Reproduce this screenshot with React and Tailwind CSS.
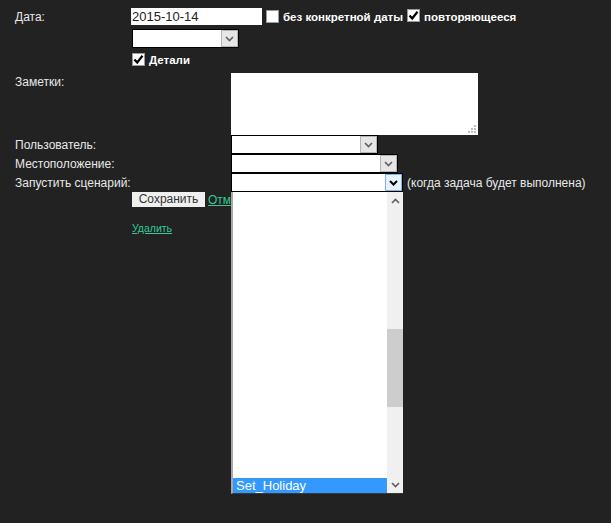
import React from "react";

function Check({ checked }) {
  return (
    <span className="inline-flex w-[13px] h-[13px] bg-white border border-[#9a9a9a] items-center justify-center shrink-0">
      {checked && (
        <svg width="11" height="11" viewBox="0 0 11 11">
          <path d="M1.5 5.5 L4.2 8.5 L9.5 1.8" fill="none" stroke="#000" strokeWidth="2.2" />
        </svg>
      )}
    </span>
  );
}

function Chevron({ color = "#555", w = 1.6, up = false }) {
  return (
    <svg width="9" height="6" viewBox="0 0 9 6">
      <path d={up ? "M1 5 L4.5 1.5 L8 5" : "M1 1 L4.5 4.5 L8 1"} fill="none" stroke={color} strokeWidth={w} />
    </svg>
  );
}

function Select({ width, focused }) {
  return (
    <div
      className="h-[19px] bg-white border border-black flex justify-end items-stretch shrink-0"
      style={{ width }}
    >
      <div
        className={
          focused
            ? "w-[17px] bg-[#e5f1fb] border border-[#7eb4ea] flex items-center justify-center"
            : "w-[17px] bg-[#e6e6e6] border border-[#b5b5b5] flex items-center justify-center"
        }
      >
        {focused ? <Chevron color="#000" w={2} /> : <Chevron color="#606060" />}
      </div>
    </div>
  );
}

export default function App() {
  return (
    <div className="relative w-[611px] h-[523px] bg-[#222222] text-[#e8e8e8] text-[12px] leading-[14px] font-['Liberation_Sans',Arial,sans-serif] pt-[8px] overflow-hidden">
      {/* Row 1 */}
      <div className="flex items-center h-[17px]">
        <div className="w-[131px] pl-[15px]">Дата:</div>
        <div className="w-[131px] h-[17px] bg-white text-[#222] text-[13px] leading-[17px] pl-[1px]">2015-10-14</div>
        <div className="ml-[4px] flex items-center">
          <Check />
          <span className="ml-[4px] font-bold text-white text-[11.5px]">без конкретной даты</span>
          <span className="ml-[4px]"><Check checked /></span>
          <span className="ml-[4px] font-bold text-white text-[11.5px]">повторяющееся</span>
        </div>
      </div>
      {/* Row 2 */}
      <div className="mt-[4px] ml-[132px]">
        <Select width={107} />
      </div>
      {/* Row 3 */}
      <div className="mt-[5px] ml-[132px] flex items-center h-[13px]">
        <Check checked />
        <span className="ml-[4px] font-bold text-white text-[11.5px]">Детали</span>
      </div>
      {/* Notes */}
      <div className="mt-[7px] flex">
        <div className="w-[231px] pl-[15px] pt-[2px]">Заметки:</div>
        <div className="relative w-[247px] h-[62px] bg-white">
          <svg className="absolute right-[2px] bottom-[2px]" width="8" height="8" viewBox="0 0 8 8">
            <rect x="6" y="0" width="2" height="2" fill="#c0c0c0" />
            <rect x="3" y="3" width="2" height="2" fill="#c0c0c0" />
            <rect x="6" y="3" width="2" height="2" fill="#c0c0c0" />
            <rect x="0" y="6" width="2" height="2" fill="#c0c0c0" />
            <rect x="3" y="6" width="2" height="2" fill="#c0c0c0" />
            <rect x="6" y="6" width="2" height="2" fill="#c0c0c0" />
          </svg>
        </div>
      </div>
      {/* Select rows */}
      <div className="flex items-center h-[19px]">
        <div className="w-[231px] pl-[15px]">Пользователь:</div>
        <Select width={147} />
      </div>
      <div className="flex items-center h-[19px]">
        <div className="w-[231px] pl-[15px]">Местоположение:</div>
        <Select width={167} />
      </div>
      <div className="flex items-center h-[19px]">
        <div className="w-[231px] pl-[15px]">Запустить сценарий:</div>
        <Select width={172} focused />
        <span className="ml-[4px]">(когда задача будет выполнена)</span>
      </div>
      {/* Buttons */}
      <div className="ml-[132px] flex items-center h-[15px]">
        <button className="w-[73px] h-[15px] bg-[#efefef] text-[#333] text-[12px] leading-[15px] text-center">Сохранить</button>
        <a className="ml-[3px] text-[#35c896] underline">Отмена</a>
      </div>
      <div className="mt-[15px] ml-[132px] text-[10.5px] leading-[12px]">
        <a className="text-[#35c896] underline">Удалить</a>
      </div>

      {/* Open dropdown list */}
      <div className="absolute left-[231px] top-[192px] w-[172px] h-[302px] flex border-l-[2px] border-[#a8a8a8] border-b border-b-[#3a3a3a] z-10">
        <div className="flex-1 bg-white flex flex-col justify-end">
          <div className="h-[15px] bg-[#3399ff] text-white text-[13px] leading-[15px] pl-[3px]">Set_Holiday</div>
        </div>
        <div className="w-[16px] bg-[#f0f0f0] flex flex-col">
          <div className="h-[17px] flex items-center justify-center">
            <Chevron up color="#606060" />
          </div>
          <div className="h-[120px]" />
          <div className="h-[78px] bg-[#cdcdcd]" />
          <div className="flex-1" />
          <div className="h-[17px] flex items-center justify-center">
            <Chevron color="#606060" />
          </div>
        </div>
      </div>
    </div>
  );
}
